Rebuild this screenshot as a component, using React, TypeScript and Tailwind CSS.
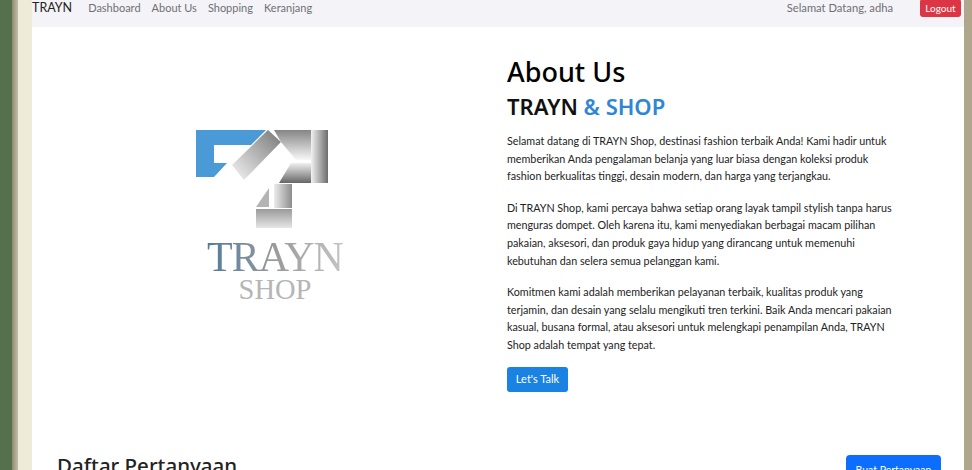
const paragraphs = [
  ["Selamat datang di TRAYN Shop, destinasi fashion terbaik Anda! Kami hadir untuk", "memberikan Anda pengalaman belanja yang luar biasa dengan koleksi produk", "fashion berkualitas tinggi, desain modern, dan harga yang terjangkau."],
  ["Di TRAYN Shop, kami percaya bahwa setiap orang layak tampil stylish tanpa harus", "menguras dompet. Oleh karena itu, kami menyediakan berbagai macam pilihan", "pakaian, aksesori, dan produk gaya hidup yang dirancang untuk memenuhi", "kebutuhan dan selera semua pelanggan kami."],
  ["Komitmen kami adalah memberikan pelayanan terbaik, kualitas produk yang", "terjamin, dan desain yang selalu mengikuti tren terkini. Baik Anda mencari pakaian", "kasual, busana formal, atau aksesori untuk melengkapi penampilan Anda, TRAYN", "Shop adalah tempat yang tepat."],
];

function LogoMark() {
  return (
    <svg width="132" height="98" viewBox="0 0 132 98" className="block mr-[26px]">
      <defs>
        <linearGradient id="diag" x1="0" y1="1" x2="1" y2="0">
          <stop offset="0" stopColor="#f4f4f4" />
          <stop offset="1" stopColor="#777777" />
        </linearGradient>
        <linearGradient id="band" x1="0" y1="0" x2="0" y2="1">
          <stop offset="0" stopColor="#858585" />
          <stop offset="1" stopColor="#f8f8f8" />
        </linearGradient>
        <linearGradient id="right" x1="0" y1="0" x2="1" y2="0">
          <stop offset="0" stopColor="#f2f2f2" />
          <stop offset="1" stopColor="#6c6c6c" />
        </linearGradient>
        <linearGradient id="mid" x1="0" y1="0" x2="0" y2="1">
          <stop offset="0" stopColor="#f0f0f0" />
          <stop offset="1" stopColor="#666666" />
        </linearGradient>
        <linearGradient id="stem" x1="0" y1="0" x2="1" y2="0">
          <stop offset="0" stopColor="#ececec" />
          <stop offset="1" stopColor="#8c8c8c" />
        </linearGradient>
        <linearGradient id="foot" x1="0" y1="0" x2="0" y2="1">
          <stop offset="0" stopColor="#9a9a9a" />
          <stop offset="1" stopColor="#e6e6e6" />
        </linearGradient>
      </defs>
      <path d="M0 0H70L55 15H18V33H31L18 47H0Z" fill="#4a9ad8" />
      <path d="M36 35L72 0L85 12L48 50Z" fill="url(#diag)" />
      <path d="M78 0H115V30H100L85 12Z" fill="url(#band)" />
      <path d="M115 0H132V53H115Z" fill="url(#right)" />
      <path d="M83 53L95 33H115V53Z" fill="url(#mid)" />
      <path d="M78 54H96V78H78Z" fill="url(#stem)" />
      <path d="M60 77L73 58V77Z" fill="#b4b4b4" />
      <path d="M60 79H96V98H60Z" fill="url(#foot)" />
    </svg>
  );
}

export default function App() {
  return (
    <div className="h-[470px] overflow-hidden flex bg-[#5f7550] font-['Lato',sans-serif]">
      <div className="w-[12px] bg-[#55704c] shrink-0" />
      <div className="w-[6px] bg-gradient-to-r from-[#8f8a72] to-[#c4bca8] shrink-0" />
      <div className="w-[14px] bg-[#eeecd8] shrink-0" />
      <main className="w-[932px] shrink-0 bg-white flex flex-col">
        <nav className="h-[27px] shrink-0 bg-[#f4f4f8] flex items-center pb-[11px] pr-[3px]">
          <span className="text-[12.5px] text-[#222] mr-[16px]">TRAYN</span>
          <div className="flex gap-[11px] text-[11px] text-[#6f6f73]">
            <span>Dashboard</span>
            <span>About Us</span>
            <span>Shopping</span>
            <span>Keranjang</span>
          </div>
          <span className="ml-auto text-[11.2px] text-[#6f6f73]">Selamat Datang, adha</span>
          <span className="ml-[27px] w-[41px] h-[18px] bg-[#dc3545] rounded-[3px] text-white text-[10px] flex items-center justify-center">Logout</span>
        </nav>
        <section className="flex pt-[28px]">
          <div className="w-[475px] shrink-0 flex flex-col items-center pt-[75px] pl-[11px]">
            <LogoMark />
            <div className="font-['Liberation_Serif',serif] text-[42px] tracking-[-1px] leading-[38px] mt-[10px] bg-gradient-to-r from-[#4f7a9f] via-[#9a9a9a] to-[#c4c4c4] bg-clip-text text-transparent">TRAYN</div>
            <div className="font-['Liberation_Serif',serif] text-[28.5px] leading-[27px] text-[#b5b5b5]">SHOP</div>
          </div>
          <div className="flex flex-col items-start">
            <h1 className="text-[27px] leading-[34px] font-['Noto_Sans',sans-serif] font-medium text-black">About Us</h1>
            <h2 className="text-[22px] leading-[28px] font-['Noto_Sans',sans-serif] font-semibold text-[#111] mt-[3px]">
              TRAYN <span className="text-[#2f86d6]">&amp; SHOP</span>
            </h2>
            <div className="mt-[12px] flex flex-col gap-[14px] text-[10.75px] leading-[17.6px] text-[#222] whitespace-nowrap">
              {paragraphs.map((lines, i) => (
                <p key={i}>
                  {lines.map((line) => (
                    <span key={line} className="block">{line}</span>
                  ))}
                </p>
              ))}
            </div>
            <span className="mt-[13px] w-[61px] h-[25px] bg-[#1a82e2] rounded-[3px] text-white text-[11px] flex items-center justify-center">Let's Talk</span>
          </div>
        </section>
        <section className="mt-[63px] flex items-start justify-between pl-[25px] pr-[23px]">
          <h2 className="text-[20.5px] leading-[20px] font-['Noto_Sans',sans-serif] font-medium text-[#222]">Daftar Pertanyaan</h2>
          <span className="w-[95px] h-[32px] bg-[#0d6efd] rounded-[4px] text-white text-[10.5px] flex items-center justify-center">Buat Pertanyaan</span>
        </section>
      </main>
      <div className="flex-1 bg-[#b0a68e]" />
    </div>
  );
}
